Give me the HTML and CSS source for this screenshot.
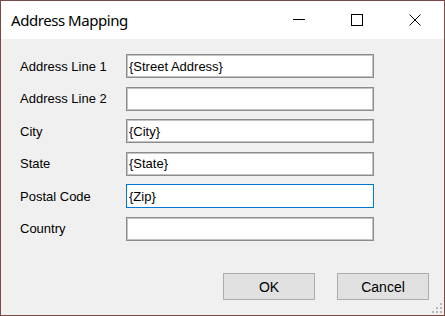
FILE: index.html
```html
<!DOCTYPE html>
<html lang="en">

<head>
  <meta charset="UTF-8" />
  <title>Address Mapping</title>
  <link rel="stylesheet" href="styles.css">
</head>

<body>
  <div class="window">
    <div class="titlebar">
      <span class="title">Address Mapping</span>
      <div class="caption-buttons">
        <span class="caption-btn">
          <svg width="12" height="12" viewBox="0 0 12 12"><path d="M0 5.5H12" stroke="#000" stroke-width="1" /></svg>
        </span>
        <span class="caption-btn">
          <svg width="12" height="12" viewBox="0 0 12 12"><rect x="0.5" y="0.5" width="11" height="11" fill="none" stroke="#000" stroke-width="1" /></svg>
        </span>
        <span class="caption-btn">
          <svg width="12" height="12" viewBox="0 0 12 12"><path d="M0.5 0.5L11.5 11.5M11.5 0.5L0.5 11.5" stroke="#000" stroke-width="1" /></svg>
        </span>
      </div>
    </div>

    <div class="content">
      <form class="fields">
        <label for="line1">Address Line 1</label>
        <input id="line1" class="field" type="text" value="{Street Address}">
        <label for="line2">Address Line 2</label>
        <input id="line2" class="field" type="text" value="">
        <label for="city">City</label>
        <input id="city" class="field" type="text" value="{City}">
        <label for="state">State</label>
        <input id="state" class="field" type="text" value="{State}">
        <label for="zip">Postal Code</label>
        <input id="zip" class="field focused" type="text" value="{Zip}">
        <label for="country">Country</label>
        <input id="country" class="field" type="text" value="">
      </form>

      <div class="actions">
        <button class="btn" type="button">OK</button>
        <button class="btn" type="button">Cancel</button>
      </div>

      <svg class="grip" width="12" height="12" viewBox="0 0 12 12">
        <rect x="9" y="1" width="2" height="2" fill="#b8b8b8" />
        <rect x="5" y="5" width="2" height="2" fill="#b8b8b8" />
        <rect x="9" y="5" width="2" height="2" fill="#b8b8b8" />
        <rect x="1" y="9" width="2" height="2" fill="#b8b8b8" />
        <rect x="5" y="9" width="2" height="2" fill="#b8b8b8" />
        <rect x="9" y="9" width="2" height="2" fill="#b8b8b8" />
      </svg>
    </div>
  </div>
</body>

</html>
```

FILE: styles.css
```css
html,
body {
  margin: 0;
  padding: 0;
  background-color: #f0f0f0;
}

.window {
  width: 445px;
  height: 316px;
  box-sizing: border-box;
  border: 1px solid #7a4a48;
  display: flex;
  flex-direction: column;
  background-color: #f0f0f0;
}

.titlebar {
  height: 38px;
  background-color: white;
  display: flex;
  align-items: center;
  justify-content: space-between;
}

.title {
  font-family: "Noto Sans", sans-serif;
  font-size: 15px;
  letter-spacing: -0.45px;
  color: #000;
  padding-left: 10px;
  margin-top: -1px;
}

.caption-buttons {
  display: flex;
  height: 100%;
}

.caption-btn {
  width: 58px;
  display: flex;
  align-items: center;
  justify-content: center;
}

.content {
  flex: 1;
  position: relative;
  display: flex;
  flex-direction: column;
  font-family: "Liberation Sans", Arial, sans-serif;
  font-size: 13px;
  color: #000;
}

.fields {
  margin: 15px 0 0 19px;
  display: grid;
  grid-template-columns: 106px 248px;
  grid-auto-rows: 24px;
  row-gap: 8.5px;
  align-items: center;
}

.fields label {
  user-select: none;
}

.field {
  height: 24px;
  box-sizing: border-box;
  margin: 0;
  padding: 0 2px;
  border: 1px solid #8c8c8c;
  box-shadow: inset 0 0 0 1px #c4c4c4;
  background: white;
  font-family: "Liberation Sans", Arial, sans-serif;
  font-size: 13px;
  color: #000;
  outline: none;
}

.field.focused {
  border-color: #0078d7;
  box-shadow: none;
}

.actions {
  margin-top: auto;
  display: flex;
  justify-content: flex-end;
  gap: 22px;
  padding: 0 15px 15px 0;
}

.btn {
  width: 92px;
  height: 27px;
  margin: 0;
  background-color: #e1e1e1;
  border: 1px solid #adadad;
  font-family: "Liberation Sans", Arial, sans-serif;
  font-size: 14px;
  color: #000;
}

.grip {
  position: absolute;
  right: 1px;
  bottom: 1px;
}
```
